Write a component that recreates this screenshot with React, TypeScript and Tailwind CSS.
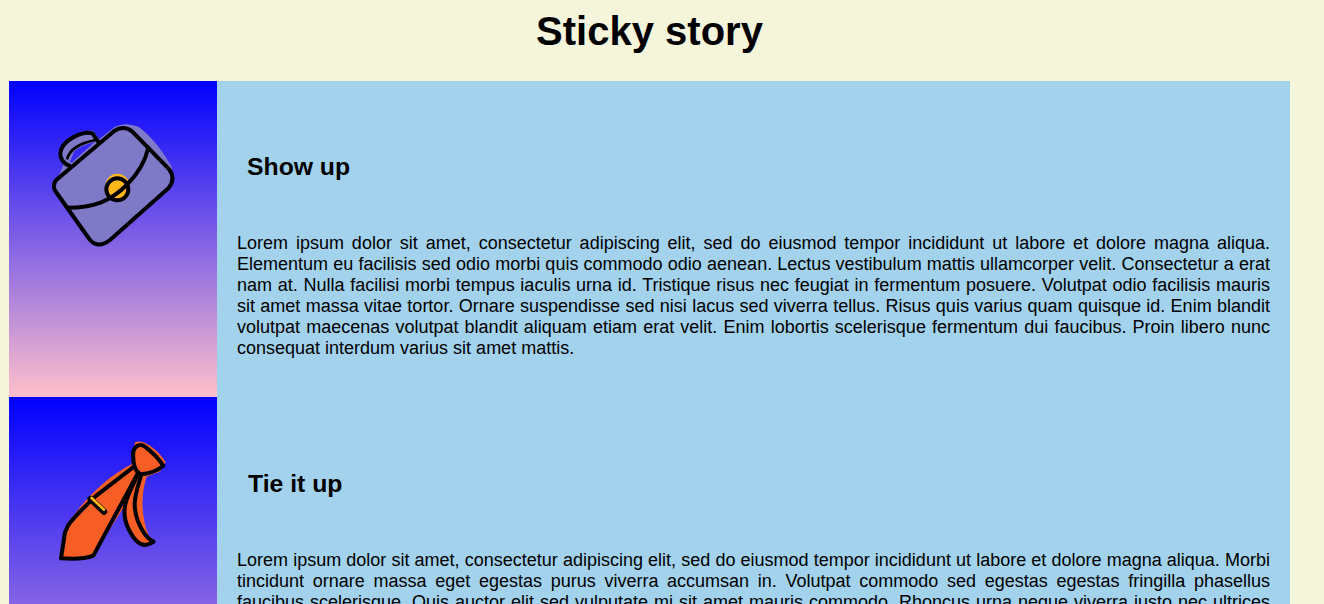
const para1 =
  "Lorem ipsum dolor sit amet, consectetur adipiscing elit, sed do eiusmod tempor incididunt ut labore et dolore magna aliqua. Elementum eu facilisis sed odio morbi quis commodo odio aenean. Lectus vestibulum mattis ullamcorper velit. Consectetur a erat nam at. Nulla facilisi morbi tempus iaculis urna id. Tristique risus nec feugiat in fermentum posuere. Volutpat odio facilisis mauris sit amet massa vitae tortor. Ornare suspendisse sed nisi lacus sed viverra tellus. Risus quis varius quam quisque id. Enim blandit volutpat maecenas volutpat blandit aliquam etiam erat velit. Enim lobortis scelerisque fermentum dui faucibus. Proin libero nunc consequat interdum varius sit amet mattis.";
const para2 =
  "Lorem ipsum dolor sit amet, consectetur adipiscing elit, sed do eiusmod tempor incididunt ut labore et dolore magna aliqua. Morbi tincidunt ornare massa eget egestas purus viverra accumsan in. Volutpat commodo sed egestas egestas fringilla phasellus faucibus scelerisque. Quis auctor elit sed vulputate mi sit amet mauris commodo. Rhoncus urna neque viverra justo nec ultrices dui sapien eget mi proin sed. Elementum eu facilisis sed odio morbi quis commodo odio aenean. Lectus vestibulum mattis ullamcorper velit. Consectetur a erat nam at. Nulla facilisi morbi tempus iaculis urna id. Tristique risus nec feugiat in fermentum posuere. Volutpat odio facilisis mauris sit amet massa vitae tortor.";

function Bag() {
  return (
    <svg width="170" height="150" viewBox="0 0 510 450" className="block">
      <path
        d="M84 205 L100 165 L88 130 L105 95 C130 72 165 60 190 63 L207 88 L255 50 Q285 35 325 50 Q375 85 425 170 L430 215 L240 390 Q205 415 180 390 L75 245 Z"
        fill="#7f7ac8"
      />
      <path d="M120 155 L132 125 C145 112 170 102 195 95 L125 158 Z" fill="#382af4" />
      <circle cx="262" cy="226" r="35" fill="#ffb81c" />
      <circle cx="262" cy="238" r="33" fill="#ffb81c" />
      <g fill="none" stroke="#000" strokeWidth="12" strokeLinecap="round" strokeLinejoin="round">
        <path d="M78 211 L250 65 Q280 43 307 65 L415 175 Q440 205 415 235 L240 390 Q205 417 180 390 L76 243 Q66 226 78 211 Z" />
        <path d="M112 293 C190 293 240 275 290 225 C320 195 345 160 355 112" />
        <path d="M120 168 C95 160 85 135 95 115 C110 85 160 62 187 70 L207 98" />
        <path d="M112 145 C118 122 145 100 197 90" strokeWidth="8" />
        <circle cx="262" cy="238" r="33" />
      </g>
    </svg>
  );
}

function Tie() {
  return (
    <svg width="170" height="150" viewBox="0 0 510 450" className="block">
      <path
        d="M315 52 C340 40 385 75 407 112 L390 140 L350 155 C335 200 330 262 355 330 L370 350 L340 365 C300 345 275 290 285 240 L190 392 L92 400 L105 315 L125 280 C170 215 240 150 305 118 Z"
        fill="#f75e25"
      />
      <g fill="none" stroke="#000" strokeWidth="12" strokeLinecap="round" strokeLinejoin="round">
        <path d="M310 78 C316 62 330 55 345 65 C365 80 385 100 400 122 C385 135 360 145 335 148 C320 145 307 125 310 78 Z" />
        <path d="M312 125 L195 215 C165 245 135 272 115 300 L105 322 L93 400 C130 403 170 400 190 392 L325 142" />
        <path d="M320 155 C305 190 295 205 288 230 C280 255 282 290 300 320 C312 345 330 360 345 360 C355 358 365 355 370 350" />
        <path d="M332 155 C322 190 315 210 314 235 C314 265 325 300 345 328 C352 338 360 345 370 350" />
      </g>
      <path d="M182 222 L222 260" stroke="#000" strokeWidth="19" strokeLinecap="round" />
      <path d="M185 219 L222 254" stroke="#ffb81c" strokeWidth="8" strokeLinecap="round" />
    </svg>
  );
}

function Row({
  title,
  text,
  icon,
  titleMargin,
  iconMargin,
  rowClass,
}: {
  title: string;
  text: string;
  icon: React.ReactNode;
  titleMargin: string;
  iconMargin: string;
  rowClass: string;
}) {
  return (
    <section className={`flex bg-[#a3d2ed] ${rowClass}`}>
      <div className="w-[208px] shrink-0 bg-linear-to-b/srgb from-[#0000ff] to-[#ffc0cb]">
        <div className={iconMargin}>{icon}</div>
      </div>
      <div className="flex-1 px-5 pt-[72px] pb-[38px]">
        <h2 className={`text-[24.75px] font-bold leading-7 ${titleMargin}`}>{title}</h2>
        <p className="mt-[52px] text-justify text-lg leading-[21px]">{text}</p>
      </div>
    </section>
  );
}

export default function App() {
  return (
    <main
      className="h-screen overflow-hidden bg-[#f5f5dc] pr-[34px] pl-[9px] text-black"
      style={{ fontFamily: '"Liberation Sans", Arial, sans-serif' }}
    >
      <h1 className="h-[81px] pt-2 text-center text-[40px] leading-[46px] font-bold">Sticky story</h1>
      <Row title="Show up" text={para1} icon={<Bag />} titleMargin="ml-2.5" iconMargin="ml-[21px] pt-[29px]" rowClass="h-[316px]" />
      <Row title="Tie it up" text={para2} icon={<Tie />} titleMargin="ml-[11px] mt-px" iconMargin="ml-[21px] pt-[28px]" rowClass="h-[398px]" />
    </main>
  );
}
